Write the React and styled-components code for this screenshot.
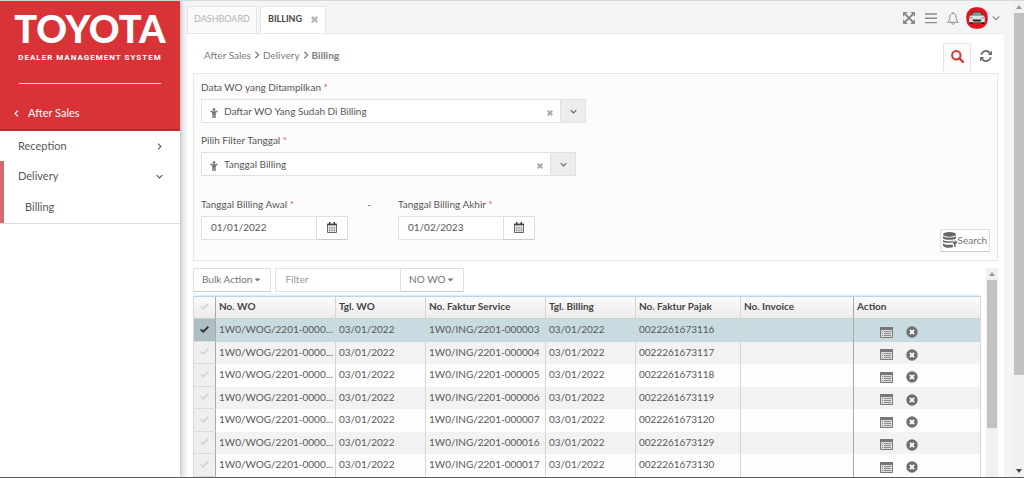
import React, { useState } from "react";
import styled, { createGlobalStyle } from "styled-components";
import { FaCaretDown } from "react-icons/fa";

const GlobalStyle = createGlobalStyle`
  *, *::before, *::after {
    box-sizing: border-box;
  }

  body {
    margin: 0;
    font-family: Lato, "Liberation Sans", sans-serif;
    font-size: 10px;
    line-height: 16px;
    color: #585858;
    background: #f3f4f6;
  }

  button, input, select {
    font: inherit;
    color: inherit;
  }

  button {
    padding: 0;
    cursor: pointer;
  }

  a {
    color: inherit;
    text-decoration: none;
  }

  svg {
    display: block;
    flex: none;
  }
`;

const Page = styled.div`
  display: flex;
  height: 100vh;
  overflow: hidden;
  border-top: 1px solid #d6d7d9;
  border-bottom: 1px solid #5c5c5c;
`;

const Sidebar = styled.aside`
  flex: none;
  width: 180px;
  font-size: 11px;
  background: #fff;
  box-shadow: 0 0 6px rgba(0, 0, 0, 0.35);
`;

const Brand = styled.div`
  height: 130px;
  display: flex;
  flex-direction: column;
  align-items: center;
  color: #fff;
  background: #d83438;
  border-bottom: 2px solid #b9292f;
`;

const Logo = styled.div`
  margin-top: 7px;
  font-size: 38px;
  font-weight: 900;
  line-height: 40px;
`;

const Tagline = styled.div`
  margin-top: 3px;
  font-family: Roboto, sans-serif;
  font-size: 8px;
  font-weight: 700;
  line-height: 14px;
  letter-spacing: 1px;
  white-space: nowrap;
`;

const Divider = styled.hr`
  width: 142px;
  margin: 18px 0 0;
  border: 0;
  border-top: 1px solid #f6cfd0;
`;

const BackLink = styled.a`
  align-self: stretch;
  display: flex;
  align-items: center;
  gap: 8px;
  margin-top: 21px;
  padding-left: 13px;
`;

const Menu = styled.nav`
  display: flex;
  flex-direction: column;
  border-bottom: 1px solid #dcdcdc;
`;

const MenuItem = styled.a`
  display: flex;
  align-items: center;
  justify-content: space-between;
  height: ${(p) => (p.$child ? 32 : 30)}px;
  padding: 0 17px 0 ${(p) => (p.$child ? 21 : 14)}px;
  border-left: 4px solid ${(p) => (p.$active ? "#d56a6e" : "transparent")};
`;

const Main = styled.main`
  flex: 1;
  min-width: 0;
  display: flex;
  flex-direction: column;
  padding: 5px 9px 0 7px;
`;

const TopBar = styled.header`
  display: flex;
  align-items: flex-end;
  justify-content: space-between;
  height: 28px;
`;

const Tabs = styled.div`
  display: flex;
  gap: 3px;
`;

const Tab = styled.div`
  display: flex;
  align-items: center;
  gap: 9px;
  height: 28px;
  padding: 0 ${(p) => (p.$active ? 7 : 6)}px 2px;
  border: 1px solid #e3e5e6;
  border-bottom-color: ${(p) => (p.$active ? "#fff" : "#e3e5e6")};
  background: ${(p) => (p.$active ? "#fff" : "#f9faf9")};
  color: ${(p) => (p.$active ? "#444" : "#b4b4b4")};
  font-weight: ${(p) => (p.$active ? 700 : 400)};
  font-size: 9px;
`;

const PlainButton = styled.button`
  display: flex;
  align-items: center;
  justify-content: center;
  border: 0;
  background: none;
  color: ${(p) => p.$color || "#8a8a8a"};
`;

const TopActions = styled.div`
  display: flex;
  align-items: center;
  gap: 10px;
  height: 28px;
  padding: 0 4px 4px 0;
`;

const UserButton = styled(PlainButton)`
  gap: 4px;
  margin-left: -3px;
`;

const Content = styled.div`
  flex: 1;
  min-height: 0;
  display: flex;
  flex-direction: column;
  margin-top: -1px;
  padding: 9px 6px 0;
  border-top: 1px solid #e8e9ea;
  background: #fff;
`;

const Heading = styled.div`
  flex: none;
  display: flex;
  align-items: flex-start;
  justify-content: space-between;
  height: 30px;
`;

const Breadcrumb = styled.nav`
  display: flex;
  align-items: center;
  gap: 2px;
  height: 24px;
  padding-left: 11px;
  color: #7c7c7c;
`;

const HeadingActions = styled.div`
  display: flex;
  gap: 9px;
  height: 28px;
  padding-right: 6px;
`;

const SearchTab = styled(PlainButton)`
  width: 28px;
  padding-bottom: 3px;
  border: 1px solid #e4e4e6;
  border-bottom: 0;
  border-radius: 2px 2px 0 0;
  background: #fdfafa;
`;

const RefreshButton = styled(PlainButton)`
  padding-bottom: 3px;
`;

const Panel = styled.form`
  flex: none;
  display: flex;
  flex-direction: column;
  padding: 5px 7px 8px;
  border: 1px solid #e8e8e8;
  background: #fdfbfb;
`;

const Field = styled.div`
  display: flex;
  flex-direction: column;
  gap: 4px;
  width: 100%;
  max-width: ${(p) => p.$width}px;
`;

const Label = styled.label`
  line-height: 16px;

  span {
    color: #d9565a;
  }
`;

const Stack = styled.div`
  display: flex;
  flex-direction: column;
  gap: 9px;
`;

const Combo = styled.div`
  display: flex;
  align-items: stretch;
  height: 24px;
  border: 1px solid #e2e2e2;
  background: #fff;
`;

const ComboIcon = styled.span`
  display: flex;
  align-items: center;
  padding: 3px 6px 0 8px;
  color: #707070;
`;

const ComboSelect = styled.select`
  flex: 1;
  min-width: 0;
  padding: 0;
  border: 0;
  appearance: none;
  background: none;
  outline: none;
`;

const ClearButton = styled(PlainButton)`
  width: 20px;
  padding-top: 3px;
`;

const ComboArrow = styled(PlainButton)`
  width: 25px;
  border-left: 1px solid #e0e0e0;
  background: #ededee;
`;

const DateRow = styled.div`
  display: flex;
  align-items: flex-start;
  margin-top: 20px;
`;

const Dash = styled.span`
  width: 50px;
  text-align: center;
  padding-right: 8px;
`;

const DateBox = styled.div`
  display: flex;
  height: 24px;
`;

const TextInput = styled.input`
  flex: 1;
  min-width: 0;
  padding: 0 9px 2px;
  border: 1px solid #e2e2e2;
  border-right: 0;
  background: #fff;
  outline: none;

  &::placeholder {
    color: #999;
    opacity: 1;
  }
`;

const OutlineButton = styled.button`
  display: flex;
  align-items: center;
  justify-content: center;
  gap: 1px;
  height: 24px;
  padding: 0 ${(p) => p.$pad || 8}px 2px;
  border: 1px solid #dedede;
  border-bottom-color: #cccccc;
  border-radius: 1px;
  background: #fff;
  color: ${(p) => p.$color || "#747474"};
  white-space: nowrap;
`;

const SubmitButton = styled(OutlineButton)`
  align-self: flex-end;
  gap: 0;
  height: 23px;
  margin-top: -11px;
`;

const ListArea = styled.section`
  flex: 1;
  min-height: 0;
  display: flex;
  gap: 5px;
  padding-top: 7px;
`;

const ListColumn = styled.div`
  flex: 1;
  min-width: 0;
  overflow: hidden;
`;

const Toolbar = styled.div`
  display: flex;
  gap: 4px;
  margin-bottom: 4px;
`;

const FilterGroup = styled.div`
  display: flex;
  width: 189px;
`;

const Table = styled.table`
  width: 100%;
  table-layout: fixed;
  border-collapse: separate;
  border-spacing: 0;
  border: 1px solid #d8d8d8;
  border-top-color: #bcd3ea;
  box-shadow: 0 -1px 2px #d5e6f6;
`;

const Th = styled.th`
  height: 22px;
  padding: 0 3px 3px;
  text-align: left;
  font-weight: 700;
  color: #444;
  background: linear-gradient(#fbfbfb, #ececec);
  border-right: 1px solid ${(p) => (p.$strong ? "#aaa" : "#d6d6d6")};
  border-bottom: 1px solid #cfcfcf;

  &:last-child {
    border-right: 0;
  }
`;

const Td = styled.td`
  padding: 0 0 3px 3px;
  overflow: hidden;
  text-overflow: ellipsis;
  white-space: nowrap;
  border-right: 1px solid ${(p) => (p.$strong ? "#aaa" : "#d6d6d6")};

  &:last-child {
    border-right: 0;
  }
`;

const CheckCell = styled(Td)`
  padding: 0 0 2px;
  background: ${(p) => (p.$selected ? "#aebfc3" : "#efefed")};
  border-bottom: 1px solid #dcdcdc;
`;

const Row = styled.tr`
  height: ${(p) => (p.$alt ? 22 : 23)}px;
  background: ${(p) => (p.$selected ? "#c8dbe0" : p.$alt ? "#f2f2f2" : "#fdfdfd")};
`;

const CheckLabel = styled.label`
  display: flex;
  align-items: center;
  justify-content: center;
  height: 16px;
  color: ${(p) => (p.$checked ? "#333" : "#d6d6d6")};

  input {
    width: 0;
    height: 0;
    margin: 0;
    appearance: none;
  }
`;

const RowActions = styled.div`
  display: flex;
  gap: 13px;
  padding: 6px 0 0 23px;
`;

const Scroll = styled.div`
  flex: none;
  display: flex;
  flex-direction: column;
  align-items: center;
  width: ${(p) => p.$width}px;
  background: #f1f1f1;
`;

const ScrollThumb = styled.div`
  width: 10px;
  flex: 0 0 ${(p) => p.$size}%;
  background: #c1c1c1;
`;

const ScrollArrow = styled.div`
  flex: none;
  display: flex;
  align-items: center;
  justify-content: center;
  height: 12px;
  margin-top: ${(p) => (p.$end ? "auto" : 0)};
  color: ${(p) => (p.$end ? "#444" : "#999")};
`;

const Chevron = ({ to = "down", size = 8, weight = 1.6 }) => {
  const turn = { down: 0, left: 90, right: -90 }[to];
  return (
    <svg width={size} height={size} viewBox="0 0 10 10" fill="none" stroke="currentColor" strokeWidth={weight}>
      <path d="M1 3l4 4 4-4" transform={`rotate(${turn} 5 5)`} />
    </svg>
  );
};

const Cross = ({ size = 7 }) => (
  <svg width={size} height={size} viewBox="0 0 10 10" stroke="currentColor" strokeWidth="3.4">
    <path d="M1.2 1.2l7.6 7.6M8.8 1.2L1.2 8.8" />
  </svg>
);

const Triangle = ({ up }) => (
  <svg width="6" height="4" viewBox="0 0 6 4" fill="currentColor">
    <path d={up ? "M0 4l3-4 3 4z" : "M0 0h6L3 4z"} />
  </svg>
);

const ChildIcon = () => (
  <svg width="8" height="10" viewBox="0 0 8 10" fill="currentColor">
    <circle cx="4" cy="1.6" r="1.4" />
    <path d="M.8 2.500L2.600 3.200h2.800l1.800-.7.6 1L5.700 4.900V10H4.300V7.200h-.6V10H2.300V4.900L.2 3.500z" />
  </svg>
);

const CalendarIcon = () => (
  <svg width="10" height="11" viewBox="0 0 10 11" fill="none" stroke="#444">
    <path d="M.5 2.500h9v8h-9z" strokeWidth=".8" />
    <path d="M0 2.500h10" strokeWidth="1.800" />
    <path d="M2.700 0v2.500M7.300 0v2.500" strokeWidth="1.600" />
    <path d="M2.700 4v6.500M5 4v6.500M7.300 4v6.500M1 6h8M1 8.300h8" strokeWidth=".4" />
  </svg>
);

const ExpandIcon = () => (
  <svg width="12" height="12" viewBox="0 0 12 12" fill="currentColor">
    <path d="M0 0h4.800L0 4.800zM12 0v4.800L7.200 0zM0 12V7.200L4.800 12zM12 12H7.200L12 7.200z" />
    <path d="M2 2l8 8M10 2l-8 8" stroke="currentColor" strokeWidth="1.900" />
  </svg>
);

const MenuIcon = () => (
  <svg width="12" height="11" viewBox="0 0 12 11" stroke="currentColor" strokeWidth="1.400">
    <path d="M0 1h12M0 5.300h12M0 9.600h12" />
  </svg>
);

const BellIcon = () => (
  <svg width="12" height="13" viewBox="0 0 12 13" fill="none" stroke="currentColor">
    <path d="M6 1.500C3.800 1.500 2.900 3.200 2.900 5c0 2.500-.8 4-2.300 5.300h10.800C9.900 9 9.100 7.500 9.100 5c0-1.800-.9-3.500-3.100-3.500zM6 0v1.500M4.600 10.500c.1 1.100.6 1.700 1.400 1.700s1.300-.6 1.400-1.700" />
  </svg>
);

const CarBadge = () => (
  <svg width="22" height="22" viewBox="0 0 22 22">
    <rect x=".3" y=".3" width="21.400" height="21.400" rx="9" fill="#e3131f" />
    <path d="M6.500 4.600h9l2 4.600h-13z" fill="#4a3a3c" />
    <path d="M7.300 5.600h7.400l1.200 3H6.100z" fill="#8e8e92" />
    <path d="M4.300 8.600h13.400l1.100 2.200v4.700H3.200v-4.700z" fill="#e2e2e4" />
    <path d="M6.300 12.400h9.400l-1.200 2h-7z" fill="#232326" />
    <path d="M3.500 15.300h3.200v1.700H3.500zM15.300 15.300h3.200v1.700h-3.200z" fill="#222" />
    <path d="M6.700 15.300h8.600v.9H6.700z" fill="#555" />
    <path d="M3.600 10.800h3M15.400 10.800h3" stroke="#858588" />
  </svg>
);

const SearchIcon = () => (
  <svg width="13" height="13" viewBox="0 0 13 13" fill="none" stroke="currentColor" strokeWidth="2">
    <circle cx="5.300" cy="5.300" r="4.200" />
    <path d="M8.300 8.300l3.600 3.600" strokeWidth="2.200" strokeLinecap="round" />
  </svg>
);

const RefreshIcon = () => (
  <svg width="12" height="12" viewBox="0 0 12 12" fill="none" stroke="currentColor" strokeWidth="1.900">
    <path d="M1.200 4.800A5 5 0 0 1 9.900 2.900M10.800 7.200A5 5 0 0 1 2.100 9.100" />
    <path d="M12 .4v4.500H7.500zM0 11.600V7.100h4.500z" fill="currentColor" stroke="none" />
  </svg>
);

const CheckIcon = () => (
  <svg width="9" height="7" viewBox="0 0 9 7" fill="none" stroke="currentColor" strokeWidth="1.900">
    <path d="M.7 3.300l2.500 2.500L8.300.8" />
  </svg>
);

const DatabaseIcon = () => (
  <svg width="15" height="16" viewBox="0 0 15 16" fill="#666">
    <ellipse cx="6.500" cy="2.400" rx="6.500" ry="2.400" />
    <path d="M0 4c1.500 2 11.500 2 13 0v2.300c-1.500 2-11.500 2-13 0zM0 7.700c1.500 2 11.500 2 13 0v1H8.200l1 1.700C6 11 1 10.700 0 9.700zM0 11.200c1.500 1.600 6 1.900 9.600 1.200l.6 2.600C6.500 16.400 1 15.700 0 13.700z" />
    <path d="M8.800 9.500h6l-2.200 3v2.800l-1.600-1v-1.800z" />
  </svg>
);

const ListIcon = () => (
  <svg width="13" height="11" viewBox="0 0 13 11" fill="none" stroke="#777">
    <path d="M.5.500h12v10H.5z" fill="#ddd" />
    <path d="M0 1.500h13" strokeWidth="3" />
    <path d="M2 4.500h1M4 4.500h7M2 6.500h1M4 6.500h7M2 8.500h1M4 8.500h7" stroke="#8c8c8c" />
  </svg>
);

const RemoveIcon = () => (
  <svg width="12" height="12" viewBox="0 0 12 12">
    <circle cx="6" cy="6" r="5.700" fill="#6e6e6e" />
    <path d="M3.900 3.900l4.200 4.200M8.100 3.900L3.900 8.100" stroke="#fff" strokeWidth="1.900" />
  </svg>
);

const rows = [
  ["1W0/WOG/2201-0000...", "1W0/ING/2201-000003", "0022261673116"],
  ["1W0/WOG/2201-0000...", "1W0/ING/2201-000004", "0022261673117"],
  ["1W0/WOG/2201-0000...", "1W0/ING/2201-000005", "0022261673118"],
  ["1W0/WOG/2201-0000...", "1W0/ING/2201-000006", "0022261673119"],
  ["1W0/WOG/2201-0000...", "1W0/ING/2201-000007", "0022261673120"],
  ["1W0/WOG/2201-0000...", "1W0/ING/2201-000016", "0022261673129"],
  ["1W0/WOG/2201-0000...", "1W0/ING/2201-000017", "0022261673130"],
];

const ComboField = ({ id, label, value, width }) => (
  <Field $width={width}>
    <Label htmlFor={id}>
      {label} <span>*</span>
    </Label>
    <Combo>
      <ComboIcon>
        <ChildIcon />
      </ComboIcon>
      <ComboSelect id={id}>
        <option>{value}</option>
      </ComboSelect>
      <ClearButton type="button" aria-label="Clear" $color="#aaa">
        <Cross size={6} />
      </ClearButton>
      <ComboArrow type="button" aria-label="Open" $color="#666">
        <Chevron size={7} />
      </ComboArrow>
    </Combo>
  </Field>
);

const DateField = ({ id, label, value, width }) => (
  <Field $width={width}>
    <Label htmlFor={id}>
      {label} <span>*</span>
    </Label>
    <DateBox>
      <TextInput id={id} defaultValue={value} />
      <OutlineButton type="button" aria-label="Calendar" $pad={10}>
        <CalendarIcon />
      </OutlineButton>
    </DateBox>
  </Field>
);

const BillingTable = () => {
  const [selected, setSelected] = useState(0);
  return (
    <Table>
      <colgroup>
        <col style={{ width: 22 }} />
        <col style={{ width: 120 }} />
        <col style={{ width: 90 }} />
        <col style={{ width: 120 }} />
        <col style={{ width: 90 }} />
        <col style={{ width: 105 }} />
        <col style={{ width: 113 }} />
        <col />
      </colgroup>
      <thead>
        <tr>
          <Th $strong>
            <CheckLabel>
              <input type="checkbox" aria-label="Select all" />
              <CheckIcon />
            </CheckLabel>
          </Th>
          <Th>No. WO</Th>
          <Th>Tgl. WO</Th>
          <Th>No. Faktur Service</Th>
          <Th>Tgl. Billing</Th>
          <Th>No. Faktur Pajak</Th>
          <Th $strong>No. Invoice</Th>
          <Th>Action</Th>
        </tr>
      </thead>
      <tbody>
        {rows.map(([wo, faktur, pajak], i) => (
          <Row key={faktur} $alt={i % 2 === 1} $selected={i === selected}>
            <CheckCell $strong $selected={i === selected}>
              <CheckLabel $checked={i === selected}>
                <input
                  type="checkbox"
                  aria-label={faktur}
                  checked={i === selected}
                  onChange={() => setSelected(i)}
                />
                <CheckIcon />
              </CheckLabel>
            </CheckCell>
            <Td>{wo}</Td>
            <Td>03/01/2022</Td>
            <Td>{faktur}</Td>
            <Td>03/01/2022</Td>
            <Td>{pajak}</Td>
            <Td $strong />
            <Td>
              <RowActions>
                <PlainButton aria-label="Detail">
                  <ListIcon />
                </PlainButton>
                <PlainButton aria-label="Remove">
                  <RemoveIcon />
                </PlainButton>
              </RowActions>
            </Td>
          </Row>
        ))}
      </tbody>
    </Table>
  );
};

const App = () => (
  <>
    <GlobalStyle />
    <Page>
      <Sidebar>
        <Brand>
          <Logo>TOYOTA</Logo>
          <Tagline>DEALER MANAGEMENT SYSTEM</Tagline>
          <Divider />
          <BackLink href="#after-sales">
            <Chevron to="left" size={7} />
            After Sales
          </BackLink>
        </Brand>
        <Menu>
          <MenuItem href="#reception">
            Reception
            <Chevron to="right" size={7} />
          </MenuItem>
          <MenuItem href="#delivery" $active>
            Delivery
            <Chevron size={7} />
          </MenuItem>
          <MenuItem href="#billing" $active $child>
            Billing
          </MenuItem>
        </Menu>
      </Sidebar>

      <Main>
        <TopBar>
          <Tabs>
            <Tab>
              <a href="#dashboard">DASHBOARD</a>
            </Tab>
            <Tab $active>
              <a href="#billing">BILLING</a>
              <PlainButton aria-label="Close tab" $color="#b8b8b8">
                <Cross />
              </PlainButton>
            </Tab>
          </Tabs>
          <TopActions>
            <PlainButton aria-label="Fullscreen">
              <ExpandIcon />
            </PlainButton>
            <PlainButton aria-label="Menu">
              <MenuIcon />
            </PlainButton>
            <PlainButton aria-label="Notifications">
              <BellIcon />
            </PlainButton>
            <UserButton aria-label="Account">
              <CarBadge />
              <Chevron size={8} weight={1.4} />
            </UserButton>
          </TopActions>
        </TopBar>

        <Content>
          <Heading>
            <Breadcrumb>
              <a href="#after-sales">After Sales</a>
              <Chevron to="right" />
              <a href="#delivery">Delivery</a>
              <Chevron to="right" />
              <b>Billing</b>
            </Breadcrumb>
            <HeadingActions>
              <SearchTab aria-label="Search" $color="#d83438">
                <SearchIcon />
              </SearchTab>
              <RefreshButton aria-label="Refresh" $color="#707070">
                <RefreshIcon />
              </RefreshButton>
            </HeadingActions>
          </Heading>

          <Panel onSubmit={(e) => e.preventDefault()}>
            <Stack>
              <ComboField
                id="data-wo"
                label="Data WO yang Ditampilkan"
                value="Daftar WO Yang Sudah Di Billing"
                width={385}
              />
              <ComboField
                id="filter-tanggal"
                label="Pilih Filter Tanggal"
                value="Tanggal Billing"
                width={375}
              />
            </Stack>
            <DateRow>
              <DateField id="awal" label="Tanggal Billing Awal" value="01/01/2022" width={147} />
              <Dash>-</Dash>
              <DateField id="akhir" label="Tanggal Billing Akhir" value="01/02/2023" width={137} />
            </DateRow>
            <SubmitButton $pad={2}>
              <DatabaseIcon />
              Search
            </SubmitButton>
          </Panel>

          <ListArea>
            <ListColumn>
              <Toolbar>
                <OutlineButton>
                  Bulk Action <FaCaretDown size={9} />
                </OutlineButton>
                <FilterGroup>
                  <TextInput placeholder="Filter" aria-label="Filter" />
                  <OutlineButton>
                    NO WO <FaCaretDown size={9} />
                  </OutlineButton>
                </FilterGroup>
              </Toolbar>
              <BillingTable />
            </ListColumn>
            <Scroll $width={12}>
              <ScrollArrow>
                <Triangle up />
              </ScrollArrow>
              <ScrollThumb $size={71} />
            </Scroll>
          </ListArea>
        </Content>
      </Main>

      <Scroll $width={11}>
        <ScrollArrow>
          <Triangle up />
        </ScrollArrow>
        <ScrollThumb $size={76} />
        <ScrollArrow $end>
          <Triangle />
        </ScrollArrow>
      </Scroll>
    </Page>
  </>
);

export default App;
